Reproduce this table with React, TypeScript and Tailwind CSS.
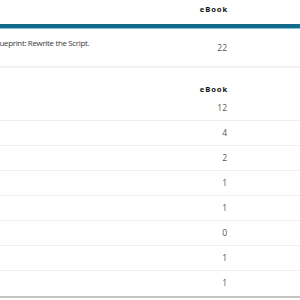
import React from "react";

const rows = ["12", "4", "2", "1", "1", "0", "1", "1"];

export default function App() {
  return (
    <div
      className="w-[300px] h-[300px] bg-white overflow-hidden text-[#333]"
      style={{ fontFamily: '"Open Sans", "Noto Sans", Arial, sans-serif' }}
    >
      {/* header */}
      <div className="flex h-[24px] items-start pt-[4px] pr-[72px]">
        <div className="flex-1" />
        <div className="text-[7.6px] font-bold tracking-[0.9px] text-[#111] leading-[10px]">eBook</div>
      </div>
      <div className="h-[4px] bg-[#136b8b]" />
      <div className="h-[1px] bg-[#86c6dd]" />
      {/* first row */}
      <div className="flex h-[39px] pr-[73px] border-b-2 border-[#f2f2f2]">
        <div className="flex-1 overflow-hidden pt-[9px]">
          <div className="text-[8px] leading-[10px] tracking-[-0.35px] text-[#3a3a3a] whitespace-nowrap ml-[-7px]">
            Blueprint: Rewrite the Script.
          </div>
        </div>
        <div className="text-[8.5px] leading-[10px] text-[#555] pt-[14px]">22</div>
      </div>
      {/* second header */}
      <div className="flex h-[28px] items-start pt-[16px] pr-[72px]">
        <div className="flex-1" />
        <div className="text-[7.6px] font-bold tracking-[0.9px] text-[#111] leading-[10px]">eBook</div>
      </div>
      {rows.map((n, i) => (
        <div
          key={i}
          className={
            i === rows.length - 1
              ? "flex h-[27px] pb-[2px] items-center pr-[73px] border-b-2 border-[#c4c4c4]"
              : "flex h-[25px] items-center pr-[73px] border-b border-[#eeeeee]"
          }
        >
          <div className="flex-1" />
          <div className="text-[8.5px] leading-[10px] text-[#555]">{n}</div>
        </div>
      ))}
    </div>
  );
}
